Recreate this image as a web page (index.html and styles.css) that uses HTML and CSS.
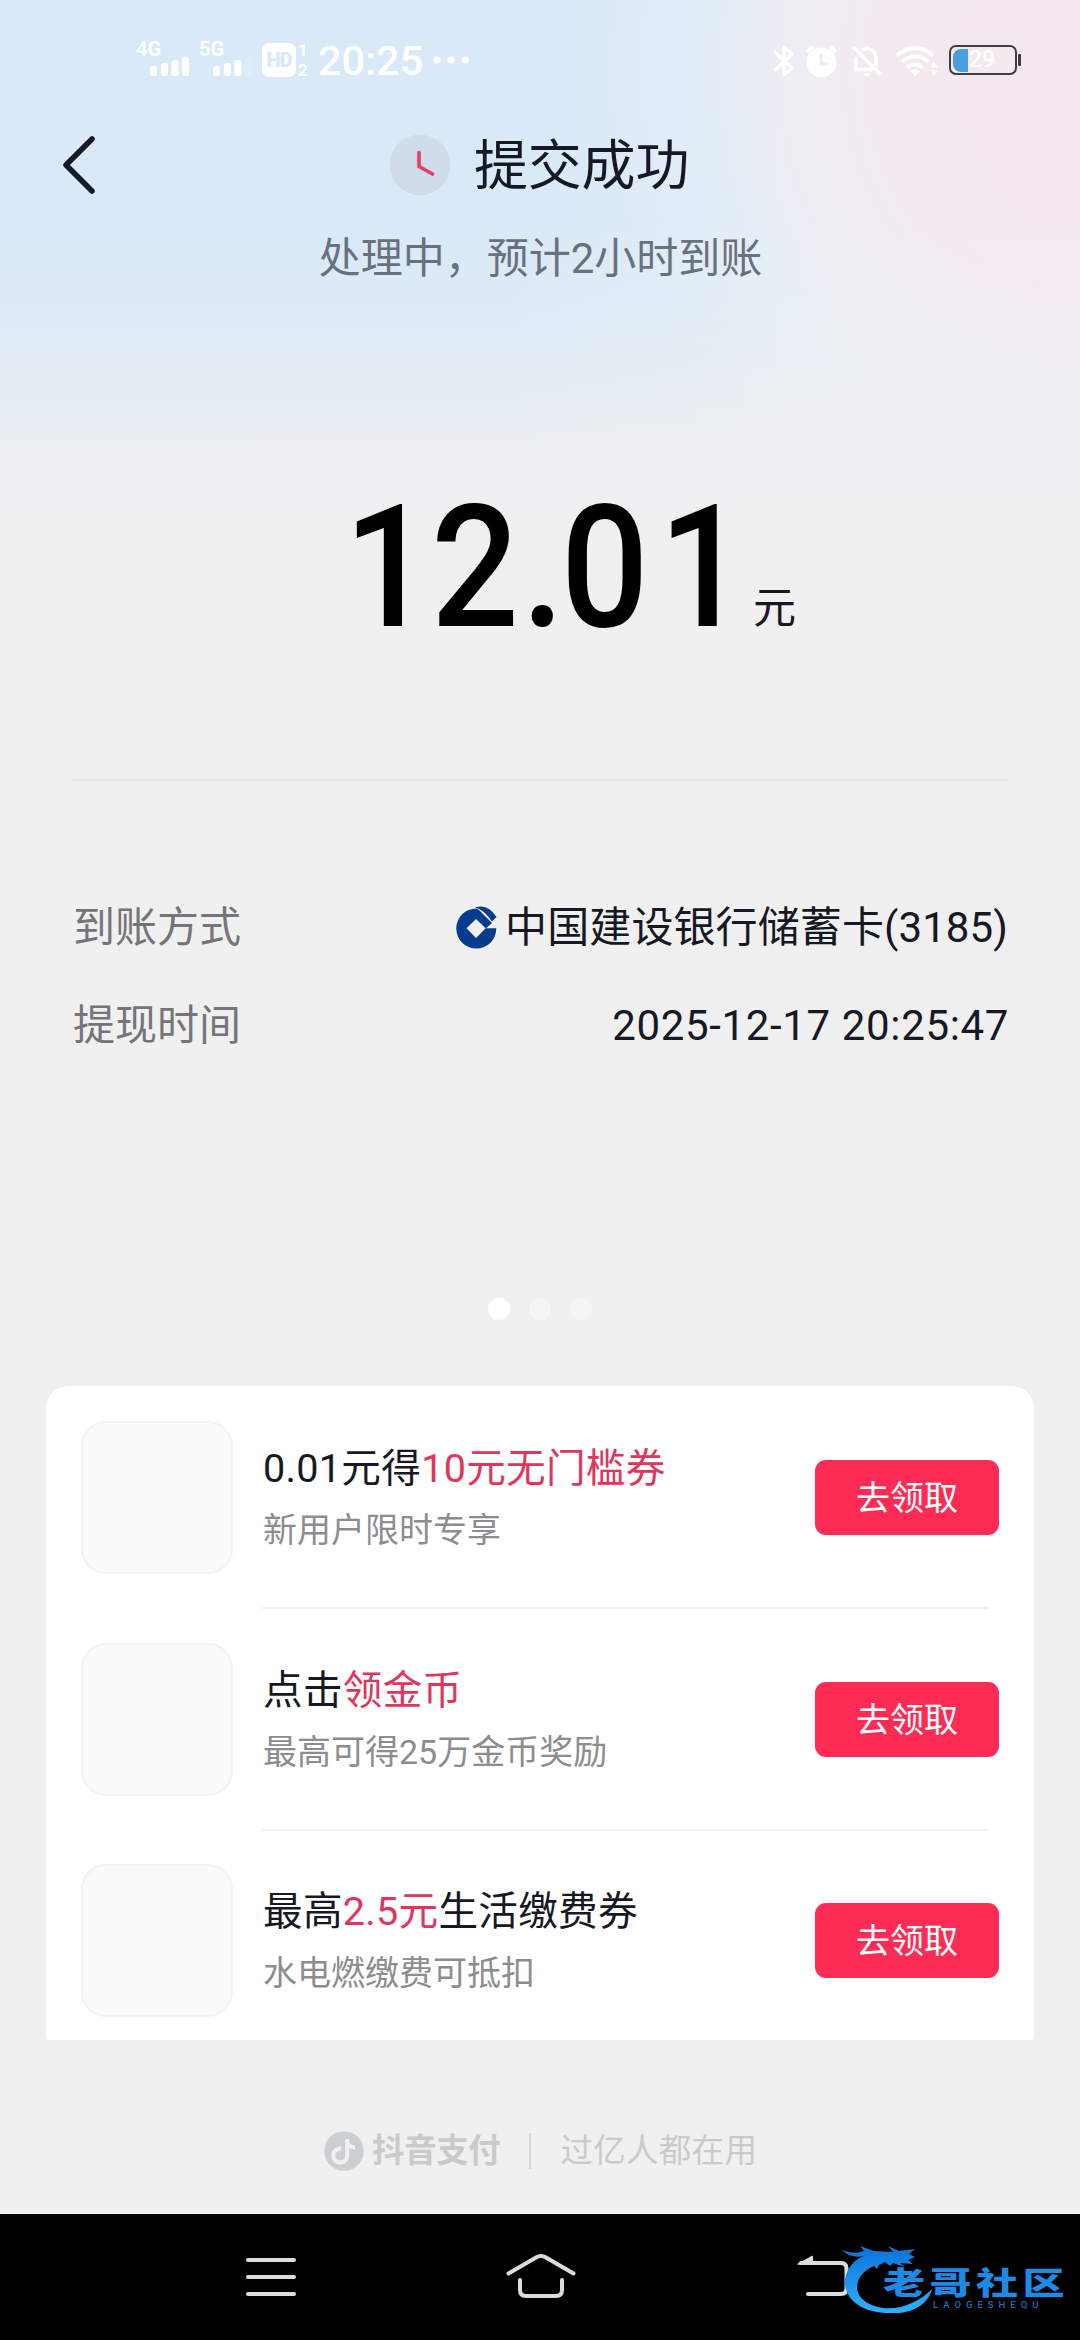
FILE: index.html
```html
<!DOCTYPE html>
<html lang="zh-CN">
<head>
<meta charset="utf-8">
<title>提交成功</title>
<link rel="stylesheet" href="styles.css">
</head>
<body>
<div class="screen">
  <header class="status">
    <div class="signal"><span class="net">4G</span>
      <svg class="bars" width="40" height="19" viewBox="0 0 40 19" fill="#fff"><rect x="0" y="9" width="7" height="10" rx="2.5"/><rect x="11" y="6" width="7" height="13" rx="2.5"/><rect x="21.500" y="3" width="7" height="16" rx="2.500"/><rect x="32" y="0" width="7" height="19" rx="2.500"/></svg>
    </div>
    <div class="signal second"><span class="net">5G</span>
      <svg class="bars" width="40" height="19" viewBox="0 0 40 19" fill="#fff"><rect x="0" y="9" width="7" height="10" rx="2.500"/><rect x="11" y="6" width="7" height="13" rx="2.500"/><rect x="21.500" y="3" width="7" height="16" rx="2.500"/><rect x="32" y="0" width="7" height="19" rx="2.500" opacity=".2"/></svg>
    </div>
    <span class="hd">HD</span>
    <span class="sims"><i>1</i><i>2</i></span>
    <span class="time">20:25</span>
    <svg class="more" width="36" height="8" viewBox="0 0 36 8" fill="#fff"><circle cx="4" cy="4" r="3.600"/><circle cx="18" cy="4" r="3.600"/><circle cx="32.500" cy="4" r="3.600"/></svg>
    <svg class="sys" width="166" height="34" viewBox="0 0 166 34" fill="none" stroke="#fff" stroke-width="3.400">
      <path d="M2 7 20 24 12 31V3l8 7L2 27" stroke-linejoin="round"/>
      <circle cx="49.500" cy="18.500" r="15" fill="#fff" stroke="none"/>
      <path d="M35 8l6-5.500M64 8l-6-5.500" stroke-width="4"/>
      <path d="M49 10v10h7" stroke="#e9ecf3" stroke-width="3"/>
      <path d="M81 3l27 27M84 13c-1 5 0 8 0 12.500H101M90 6.500c5-4.500 14-1 14 8.500v7" stroke-width="3.600"/>
      <path d="M91.500 29.500h7a3.500 3 0 0 1-7 0z" fill="#fff" stroke="none"/>
      <path d="M125 11.500c11-10 26-10 36 0M130 17.500c8-7 18-7 26 0M135.500 23.500c5-4 10-4 15 0" stroke-width="4.200"/>
      <path d="M138 27c3-2.500 7-2.500 10 0l-5 5.500zM158.500 23.500l3.500-6 3.500 6zM158.500 26l3.500 6 3.500-6z" fill="#fff" stroke="none"/>
    </svg>
    <div class="battery"><span class="charge"></span><span class="level">29</span></div><span class="tip"></span>
  </header>

  <section class="head">
    <svg class="back" width="36" height="60" viewBox="0 0 36 60" fill="none" stroke="#151a26" stroke-width="5.500" stroke-linecap="round" stroke-linejoin="round"><path d="M32 4 6 30l26 26"/></svg>
    <svg class="clock" width="62" height="62" viewBox="0 0 62 62" fill="none"><circle cx="31" cy="31" r="30.300" fill="#d0dce9"/><path d="M30 18.500V32.500l13.500 7.500" stroke="#e83e63" stroke-width="3.700" stroke-linecap="round" stroke-linejoin="round"/></svg>
    <h1>提交成功</h1>
  </section>
  <p class="note">处理中，预计2小时到账</p>
  <div class="amount"><strong><span class="one">1</span>2<span class="point">.</span><span class="zero">0</span>1</strong><span class="unit">元</span></div>

  <section class="details">
    <div class="line"><span class="label">到账方式</span><span class="value">
      <svg class="bank" width="42" height="44" viewBox="0 0 42 44"><circle cx="20.300" cy="22.500" r="20" fill="#063b8e"/><path d="M18 0 24 5 36 17 30 22.300H42V0z" fill="#f0f0f0"/><path d="M19 1.500Q32-3 40.500 11L36 15.500Q31 8.500 27 5.500 23 2.500 19 1.500z" fill="#063b8e"/><path d="M20 13 29.700 22.300 20 32 10.500 22.300z" fill="#f0f0f0"/></svg>中国建设银行储蓄卡(3185)</span></div>
    <div class="line"><span class="label">提现时间</span><span class="value date">2025-12-17 20:25:47</span></div>
  </section>

  <div class="pager"><i class="on"></i><i></i><i></i></div>

  <main class="offers">
    <article class="offer"><div class="thumb"></div><div class="body"><h2>0.01元得<em>10元无门槛券</em></h2><p>新用户限时专享</p></div><button>去领取</button></article>
    <article class="offer"><div class="thumb"></div><div class="body"><h2>点击<em>领金币</em></h2><p>最高可得25万金币奖励</p></div><button>去领取</button></article>
    <article class="offer"><div class="thumb"></div><div class="body"><h2>最高<em>2.5元</em>生活缴费券</h2><p>水电燃缴费可抵扣</p></div><button>去领取</button></article>
  </main>

  <footer class="brand">
    <svg width="40" height="40" viewBox="0 0 40 40"><circle cx="20" cy="20" r="19.700" fill="#cbcfd1"/><path d="M23.200 8v16.500a7 7 0 1 1-6-6.800" fill="none" stroke="#f0f0f0" stroke-width="4.200"/><path d="M23 7.500c1 4.500 4 6.500 8 7v4c-3 0-6-1-8-3z" fill="#f0f0f0"/></svg>
    <b>抖音支付</b><i></i><span>过亿人都在用</span>
  </footer>

  <nav class="nav">
    <svg width="52" height="40" viewBox="0 0 52 40"><path d="M3 3h46M3 20h46M3 37h46"/></svg>
    <svg width="72" height="46" viewBox="0 0 72 46"><path d="M3.500 20.500 31 4.500q5-3 10 0l27.500 16M15 27v10q0 6 6 6h30q6 0 6-6V27"/></svg>
    <svg width="54" height="46" viewBox="0 0 54 46"><path d="M4 10h40q5.500 0 5.500 5.500v20q0 5.500-5.500 5.500H11"/><path class="arrow" d="M1 11 15.500 3v8z"/></svg>
  </nav>

  <div class="stamp">
    <svg width="100" height="76" viewBox="0 0 100 76">
      <defs><linearGradient id="wave" x1="0" y1="0" x2="0" y2="1"><stop offset="0" stop-color="#0b72d8"/><stop offset="1" stop-color="#2db0ff"/></linearGradient></defs>
      <path fill="url(#wave)" d="M0 8q12 5 22 1l-4-5 14 5 19 1-5-6 11 5 16-2-6 5 6 3-7 3 5 4-13-1 5 4-12-4-3 3-5-4-6 3-2 4-3-3C10 33 6 60 41 66 59 68 77 60 90 47c-4 17-23 25-39 24C20 72 1 57 3 37 5 26 12 17 24 13 14 17 5 13 0 8z"/>
    </svg>
    <div class="words"><b>老哥社区</b><small>LAOGESHEQU</small></div>
  </div>
</div>
</body>
</html>
```
FILE: styles.css
```css
* { box-sizing: border-box; margin: 0; padding: 0; }
i, em { font-style: normal; }
body { width: 1080px; height: 2340px; overflow: hidden; }
.screen {
  position: relative;
  display: flex;
  flex-direction: column;
  width: 1080px;
  height: 2340px;
  font-family: Roboto, "Noto Sans CJK SC", sans-serif;
  color: #161823;
  background:
    linear-gradient(to bottom, rgba(240,240,240,0) 220px, rgba(240,241,241,.2) 300px, rgba(240,240,241,.58) 400px, rgba(240,240,242,.88) 470px, #f0f0f0 530px),
    radial-gradient(circle at 1130px 70px, #f5e9ef 0, #f4e9ef 235px, rgba(239,237,243,.95) 330px, rgba(233,239,246,.6) 410px, rgba(217,233,248,0) 530px),
    linear-gradient(to right, rgba(232,241,245,0) 500px, rgba(236,242,245,.8) 1080px),
    #d9e9f8;
}

.status { display: flex; height: 120px; padding: 42px 0 0 136px; color: #fff; align-items: flex-start; }
.signal { display: flex; flex-direction: column; width: 63px; height: 34px; justify-content: space-between; }
.signal .net { height: 15px; font-size: 20px; line-height: 15px; font-weight: 700; }
.bars { margin-left: 14px; }
.hd { width: 34px; height: 34px; margin-top: 1px; border-radius: 7px; background: #fff; color: #d9e9f8; font-size: 20px; line-height: 35px; font-weight: 900; text-align: center; letter-spacing: -1px; }
.sims { display: flex; flex-direction: column; width: 18px; gap: 2px; margin-top: -1px; padding-left: 2px; font-size: 17px; line-height: 18px; font-weight: 700; }
.time { margin-left: 4px; width: 104px; font-size: 41.500px; line-height: 37px; font-weight: 500; }
.more { margin: 14px 0 0 11px; }
.sys { margin: 2px 0 0 303px; }
.battery { display: flex; align-items: center; width: 68px; height: 30px; margin: 3px 0 0 11px; padding-left: 2px; border: 2px solid #403c42; border-radius: 7px; }
.charge { width: 15px; height: 23px; border-radius: 8px 0 0 8px; background: #4b9edd; }
.level { margin-left: 1px; font-size: 23px; line-height: 24px; font-weight: 500; }
.tip { width: 3px; height: 12px; margin: 12px 0 0 1px; border-radius: 1px; background: #403c42; }

.head { display: flex; align-items: center; height: 90px; padding-left: 60px; }
.clock { margin-left: 293px; }
h1 { margin-left: 23px; padding-top: 4px; font-size: 54px; line-height: 60px; font-weight: 400; letter-spacing: -.2px; }
.note { height: 94px; padding-left: 1px; text-align: center; font-size: 42px; line-height: 98px; color: #69717c; }
.amount { display: flex; height: 475px; padding: 182px 0 0 344px; }
.amount strong { flex: none; width: 399px; font-size: 170px; line-height: 164px; font-weight: 500; color: #000; letter-spacing: 2.800px; white-space: nowrap; transform: scaleX(.91); transform-origin: left; }
.amount .one { letter-spacing: -1px; }
.amount .point { letter-spacing: -4px; }
.amount .zero { letter-spacing: 11px; }
.amount .unit { margin-left: 10px; padding-top: 92px; font-size: 43px; line-height: 60px; }

.details { display: flex; flex-direction: column; gap: 30px; height: 519px; margin: 0 72px; padding-top: 113px; border-top: 2px solid #e3e3e4; }
.line { display: flex; justify-content: space-between; height: 68px; font-size: 42px; line-height: 68px; }
.label { margin-left: 1px; color: #757579; }
.value { display: flex; align-items: center; letter-spacing: .1px; }
.bank { margin-right: 7px; }
.date { margin-right: -1px; letter-spacing: .65px; }

.pager { display: flex; gap: 19px; height: 88px; padding-left: 488px; }
.pager i { width: 22px; height: 22px; border-radius: 50%; background: #f5f5f5; }
.pager .on { background: #fff; }

.offers { height: 654px; margin: 0 46px; border-radius: 22px 22px 3px 3px; background: #fff; overflow: hidden; }
.offer { display: grid; grid-template-columns: 152px 582px 184px; height: 221.5px; padding: 35px 35px 0; }
.thumb { height: 153px; border: 2px solid #f3f3f3; border-radius: 25px; background: #fafafa; }
.body { height: 188px; margin: 0 -174px 0 29px; border-bottom: 2px solid #f1f1f1; }
.body h2 { margin-left: 1px; padding-top: 18px; font-size: 39.600px; line-height: 60px; font-weight: 400; letter-spacing: .3px; white-space: nowrap; }
.body em { color: #e2355c; }
.body p { margin-left: 1px; font-size: 34px; line-height: 63px; color: #8d8d8f; }
.offer:last-child .body { border: 0; }
button { height: 75px; margin-top: 39px; border: 0; border-radius: 11px; background: #fe2c55; color: #fff; font: 400 34px/77px Roboto, "Noto Sans CJK SC", sans-serif; }

.brand { display: flex; align-items: center; height: 174px; padding: 48px 0 0 324px; font-size: 32.500px; line-height: 44px; color: #cacacb; }
.brand b { margin-left: 8px; font-weight: 700; letter-spacing: -.4px; }
.brand i { width: 2px; height: 36px; margin: 0 29px; background: #d8d8d9; }
.brand span { letter-spacing: .3px; }

.nav { display: flex; flex: 1; align-items: flex-start; padding: 38px 0 0 245px; background: #000; }
.nav svg { margin-top: 5px; fill: none; stroke: #dcdcdc; stroke-width: 4; stroke-linecap: round; stroke-linejoin: round; }
.nav svg + svg { margin: 1px 0 0 208px; }
.nav svg:last-child { margin: 1px 0 0 220px; }
.nav .arrow { fill: #dcdcdc; stroke-width: 1; }

.stamp { position: absolute; left: 842px; top: 2242px; display: flex; }
.words { display: flex; flex-direction: column; margin: 18px 0 0 -59px; }
.words b { font: 900 42px/42px "Noto Sans CJK SC", sans-serif; letter-spacing: 4.500px; color: #1b8be6; transform: scaleY(.73); }
.words small { margin: -2px 0 0 50px; font: 500 9.500px/10px Roboto, sans-serif; letter-spacing: 5px; color: #1a6db2; }
```
